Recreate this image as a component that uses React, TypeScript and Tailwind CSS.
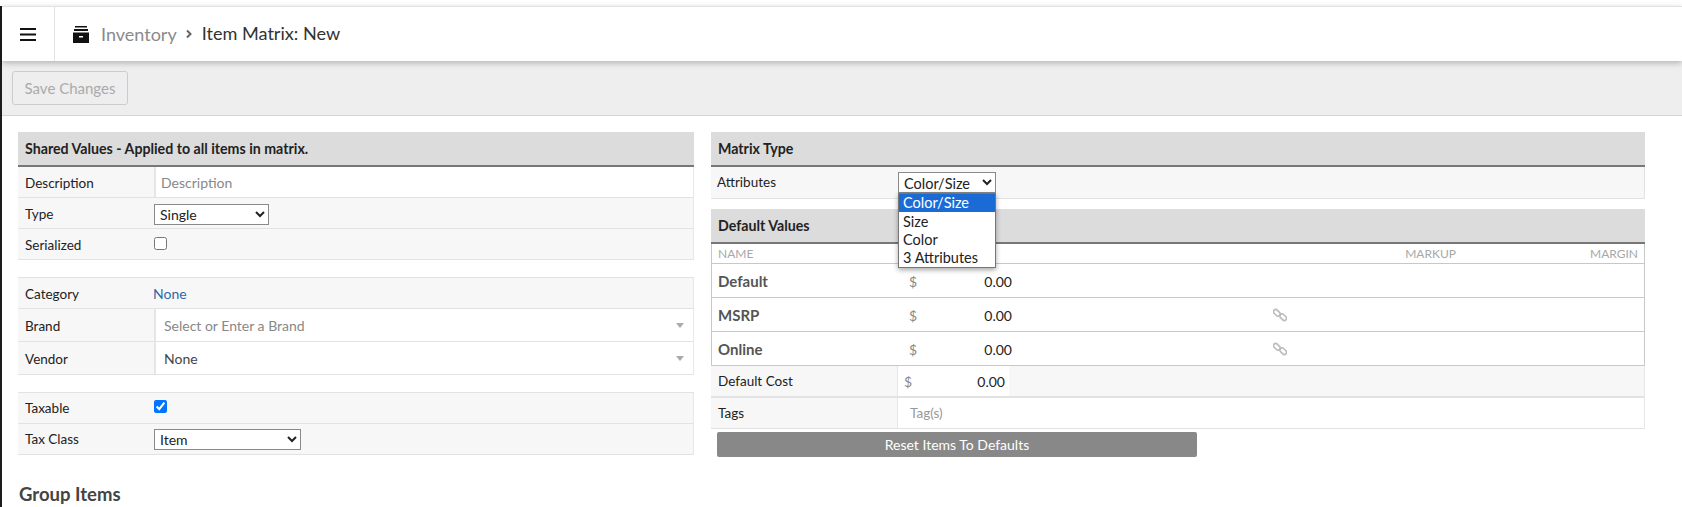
import React from "react";

// label cell + value cell, used by all form tables
const Row = ({
  label,
  h,
  white,
  flat,
  children,
}: {
  label: string;
  h: string;
  white?: boolean;
  flat?: boolean;
  children?: React.ReactNode;
}) => (
  <div className={`flex border-b border-[#e2e2e2] bg-[#f7f7f7] ${h}`}>
    <div className={`flex w-[136px] shrink-0 items-center pl-[7px] text-[#222] ${flat ? "" : "pt-[2px]"}`}>
      {label}
    </div>
    <div className={`flex flex-1 items-center ${white ? "border-l-2 border-[#e6e6e6] bg-white" : ""}`}>
      {children}
    </div>
  </div>
);

const RightRow = ({
  label,
  h,
  children,
}: {
  label: string;
  h: string;
  children?: React.ReactNode;
}) => (
  <div className={`flex border-b border-[#e2e2e2] bg-[#f7f7f7] ${h}`}>
    <div className="flex w-[187px] shrink-0 items-center border-r border-[#e6e6e6] pl-[7px] text-[#222]">
      {label}
    </div>
    <div className="flex flex-1 items-center">{children}</div>
  </div>
);

const SectionHead = ({ title }: { title: string }) => (
  <div className="flex h-[35px] items-center border-b-2 border-[#777] bg-[#dcdcdc] pl-[7px] text-[14.2px] font-bold text-[#222]">
    {title}
  </div>
);

const Caret = () => (
  <div className="mr-[9px] ml-auto h-0 w-0 border-x-[4px] border-t-[5px] border-x-transparent border-t-[#aaa]" />
);

const ChainIcon = () => (
  <svg width="14" height="14" viewBox="0 0 14 14" className="ml-[261px]" fill="none" stroke="#bbb" strokeWidth="1.6">
    <rect x="0" y="2.6" width="7.6" height="4.4" rx="2.2" transform="rotate(45 3.8 4.8)" />
    <rect x="6.4" y="7" width="7.6" height="4.4" rx="2.2" transform="rotate(45 10.2 9.2)" />
  </svg>
);

const PriceRow = ({ name, link }: { name: string; link?: boolean }) => (
  <div className="flex h-[34px] items-center border-b border-[#c8c8c8] bg-white pt-[1px] text-[14px] text-[#444]">
    <div className="w-[197px] shrink-0 pl-[6px] text-[15px] font-bold text-[#555]">{name}</div>
    <div className="flex w-[103px] shrink-0 justify-between text-[#222]">
      <span className="text-[#888]">$</span>
      <span>0.00</span>
    </div>
    {link && <ChainIcon />}
  </div>
);

export default function App() {
  return (
    <div className="h-[507px] overflow-hidden bg-white font-['Lato','Noto_Sans',sans-serif] text-[13.5px]">
      <div className="h-[6px]" />
      <div className="h-[501px] border-l-2 border-[#1c1c1c]">
        {/* top bar */}
        <div className="relative z-10 flex h-[55px] border-t border-[#e2e2e2] bg-white shadow-[0_2px_6px_rgba(0,0,0,0.25)]">
          <div className="flex w-[53px] shrink-0 items-center justify-center border-r border-[#e2e2e2]">
            <svg width="16" height="13" viewBox="0 0 16 13">
              <rect x="0" y="0" width="16" height="2" fill="#111" />
              <rect x="0" y="5.5" width="16" height="2" fill="#111" />
              <rect x="0" y="11" width="16" height="2" fill="#111" />
            </svg>
          </div>
          <div className="flex items-center pl-[18px] text-[18px]">
            <svg width="16" height="17" viewBox="0 0 16 17" className="mr-[12px]">
              <rect x="2" y="0" width="12" height="1.5" fill="#111" />
              <rect x="1" y="3" width="14" height="2" fill="#111" />
              <path d="M0 6.5h16V17H0z" fill="#111" />
              <rect x="6" y="10" width="4" height="1.5" fill="#fff" />
            </svg>
            <span className="text-[#8a8a8a]">Inventory</span>
            <svg width="8" height="10" viewBox="0 0 8 10" className="mr-[9px] ml-[8px]">
              <path d="M2 1.5 5.5 5 2 8.5" fill="none" stroke="#666" strokeWidth="2" />
            </svg>
            <span className="text-[18.1px] text-[#333]">Item Matrix: New</span>
          </div>
        </div>

        {/* toolbar */}
        <div className="flex h-[55px] items-start border-b border-[#d4d4d4] bg-[#eeeeee] pt-[10px] pl-[10px]">
          <button className="h-[34px] w-[116px] rounded-[3px] border border-[#ccc] text-[15px] text-[#aaa]">
            Save Changes
          </button>
        </div>

        <div className="flex gap-[17px] pt-[16px] pl-[16px]">
          {/* left column */}
          <div className="w-[676px] shrink-0">
            <SectionHead title="Shared Values - Applied to all items in matrix." />
            <div className="border-r border-[#e8e8e8]">
              <Row label="Description" h="h-[31px]" white>
                <span className="pl-[5px] text-[14px] text-[#888]">Description</span>
              </Row>
              <Row label="Type" h="h-[31px]">
                <select className="mt-[2px] h-[21px] w-[115px] rounded-none border border-[#8a8a8a] bg-white pl-[1px] text-[14px] text-[#222]">
                  <option>Single</option>
                </select>
              </Row>
              <Row label="Serialized" h="h-[31px]">
                <input type="checkbox" className="mb-[2px] h-[13px] w-[13px]" />
              </Row>
            </div>

            <div className="mt-[17px] border-t border-r border-[#e2e2e2] border-r-[#e8e8e8]">
              <Row label="Category" h="h-[31px]">
                <span className="-ml-[1px] text-[14px] text-[#2f6aa8]">None</span>
              </Row>
              <Row label="Brand" h="h-[33px]" white>
                <span className="pl-[8px] text-[14px] text-[#888]">Select or Enter a Brand</span>
                <Caret />
              </Row>
              <Row label="Vendor" h="h-[33px]" white>
                <span className="pl-[8px] text-[14px] text-[#444]">None</span>
                <Caret />
              </Row>
            </div>

            <div className="mt-[17px] border-t border-r border-[#e2e2e2] border-r-[#e8e8e8]">
              <Row label="Taxable" h="h-[31px]" flat>
                <input type="checkbox" defaultChecked className="mb-[4px] h-[13px] w-[13px]" />
              </Row>
              <Row label="Tax Class" h="h-[31px]" flat>
                <select className="h-[21px] w-[147px] rounded-none border border-[#8a8a8a] bg-white pl-[1px] text-[14px] text-[#222]">
                  <option>Item</option>
                </select>
              </Row>
            </div>

            <h2 className="mt-[26px] pl-[1px] text-[18.5px] font-bold text-[#444]">Group Items</h2>
          </div>

          {/* right column */}
          <div className="relative w-[934px] shrink-0">
            <SectionHead title="Matrix Type" />
            <div className="flex h-[32px] items-center border-r border-b border-[#e2e2e2] bg-[#f7f7f7] pl-[6px] text-[#222]">
              <span className="w-[181px] shrink-0">Attributes</span>
              <select
                defaultValue="Color/Size"
                className="h-[21px] w-[98px] rounded-none border border-[#8a8a8a] bg-white pt-[1px] pl-[1px] text-[14.5px] text-[#222]"
              >
                <option>Color/Size</option>
              </select>
            </div>

            <div className="mt-[10px]">
              <SectionHead title="Default Values" />
            </div>
            <div className="border-x border-[#c8c8c8]">
              <div className="flex h-[20px] items-center justify-between border-b border-[#c8c8c8] px-[6px] text-[12px] text-[#a8a8a8]">
                <span>NAME</span>
                <div className="flex">
                  <span className="mr-[134px]">MARKUP</span>
                  <span>MARGIN</span>
                </div>
              </div>
              <PriceRow name="Default" />
              <PriceRow name="MSRP" link />
              <PriceRow name="Online" link />
            </div>
            <div className="border-r border-[#e8e8e8]">
              <RightRow label="Default Cost" h="h-[32px] !border-b-2">
                <div className="flex h-full w-[111px] items-center justify-between bg-white pr-[4px] pl-[6px] text-[14px]">
                  <span className="text-[#888]">$</span>
                  <span className="text-[#222]">0.00</span>
                </div>
              </RightRow>
              <RightRow label="Tags" h="h-[31px]">
                <div className="flex h-full flex-1 items-center bg-white pl-[12px] text-[#999]">
                  Tag(s)
                </div>
              </RightRow>
            </div>
            <button className="mt-[3px] ml-[6px] block h-[25px] w-[480px] rounded-[2px] bg-[#888] text-[14px] text-white">
              Reset Items To Defaults
            </button>

            {/* open select list */}
            <div className="absolute top-[61px] left-[187px] z-20 w-[98px] border border-[#767676] bg-white text-[14.5px] text-[#222] shadow-[0_2px_5px_rgba(0,0,0,0.35)]">
              <div className="flex h-[18px] items-center bg-[#1a6bd6] pl-[4px] text-white">Color/Size</div>
              <div className="pt-[1px]">
                <div className="flex h-[18px] items-center pl-[4px]">Size</div>
                <div className="flex h-[18px] items-center pl-[4px]">Color</div>
                <div className="flex h-[18px] items-center pl-[4px]">3 Attributes</div>
              </div>
            </div>
          </div>
        </div>
      </div>
    </div>
  );
}
